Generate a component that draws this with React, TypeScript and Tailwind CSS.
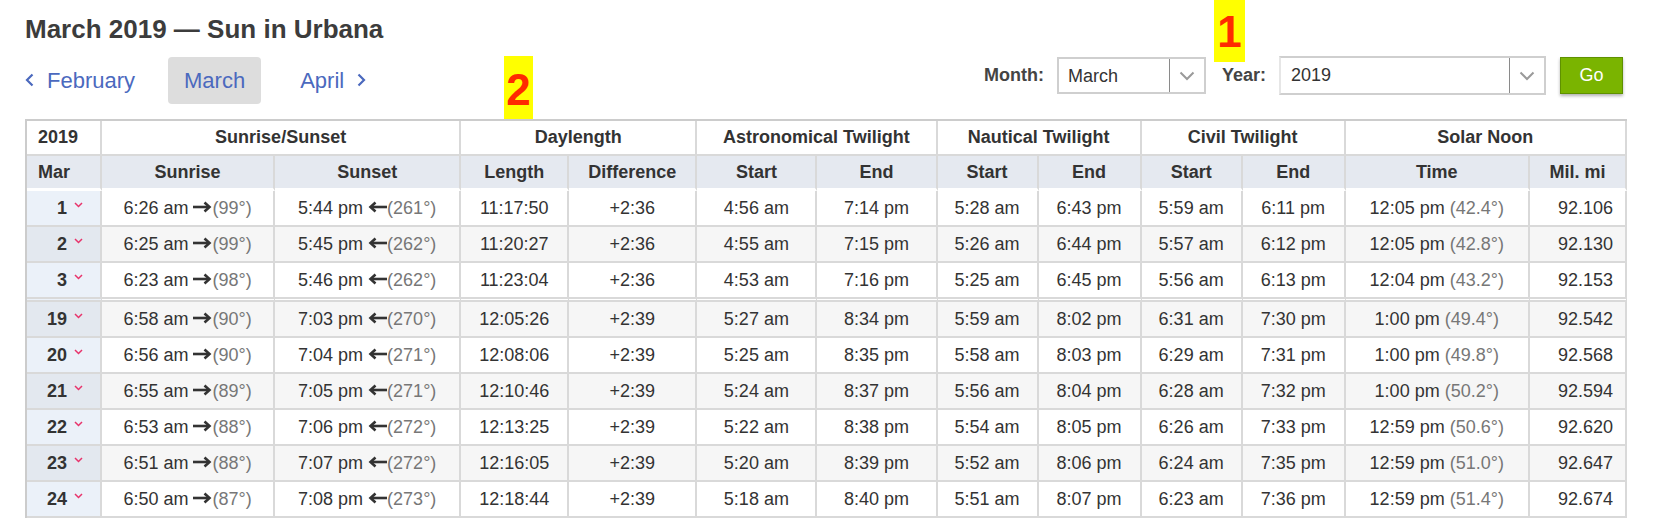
import React from 'react';

interface DayRow {
  day: number;
  rise: string;
  riseAz: string;
  set: string;
  setAz: string;
  length: string;
  diff: string;
  astStart: string;
  astEnd: string;
  nautStart: string;
  nautEnd: string;
  civStart: string;
  civEnd: string;
  noon: string;
  noonAlt: string;
  dist: string;
}

const rows: DayRow[] = [
  { day: 1, rise: '6:26 am', riseAz: '99°', set: '5:44 pm', setAz: '261°', length: '11:17:50', diff: '+2:36', astStart: '4:56 am', astEnd: '7:14 pm', nautStart: '5:28 am', nautEnd: '6:43 pm', civStart: '5:59 am', civEnd: '6:11 pm', noon: '12:05 pm', noonAlt: '42.4°', dist: '92.106' },
  { day: 2, rise: '6:25 am', riseAz: '99°', set: '5:45 pm', setAz: '262°', length: '11:20:27', diff: '+2:36', astStart: '4:55 am', astEnd: '7:15 pm', nautStart: '5:26 am', nautEnd: '6:44 pm', civStart: '5:57 am', civEnd: '6:12 pm', noon: '12:05 pm', noonAlt: '42.8°', dist: '92.130' },
  { day: 3, rise: '6:23 am', riseAz: '98°', set: '5:46 pm', setAz: '262°', length: '11:23:04', diff: '+2:36', astStart: '4:53 am', astEnd: '7:16 pm', nautStart: '5:25 am', nautEnd: '6:45 pm', civStart: '5:56 am', civEnd: '6:13 pm', noon: '12:04 pm', noonAlt: '43.2°', dist: '92.153' },
  { day: 19, rise: '6:58 am', riseAz: '90°', set: '7:03 pm', setAz: '270°', length: '12:05:26', diff: '+2:39', astStart: '5:27 am', astEnd: '8:34 pm', nautStart: '5:59 am', nautEnd: '8:02 pm', civStart: '6:31 am', civEnd: '7:30 pm', noon: '1:00 pm', noonAlt: '49.4°', dist: '92.542' },
  { day: 20, rise: '6:56 am', riseAz: '90°', set: '7:04 pm', setAz: '271°', length: '12:08:06', diff: '+2:39', astStart: '5:25 am', astEnd: '8:35 pm', nautStart: '5:58 am', nautEnd: '8:03 pm', civStart: '6:29 am', civEnd: '7:31 pm', noon: '1:00 pm', noonAlt: '49.8°', dist: '92.568' },
  { day: 21, rise: '6:55 am', riseAz: '89°', set: '7:05 pm', setAz: '271°', length: '12:10:46', diff: '+2:39', astStart: '5:24 am', astEnd: '8:37 pm', nautStart: '5:56 am', nautEnd: '8:04 pm', civStart: '6:28 am', civEnd: '7:32 pm', noon: '1:00 pm', noonAlt: '50.2°', dist: '92.594' },
  { day: 22, rise: '6:53 am', riseAz: '88°', set: '7:06 pm', setAz: '272°', length: '12:13:25', diff: '+2:39', astStart: '5:22 am', astEnd: '8:38 pm', nautStart: '5:54 am', nautEnd: '8:05 pm', civStart: '6:26 am', civEnd: '7:33 pm', noon: '12:59 pm', noonAlt: '50.6°', dist: '92.620' },
  { day: 23, rise: '6:51 am', riseAz: '88°', set: '7:07 pm', setAz: '272°', length: '12:16:05', diff: '+2:39', astStart: '5:20 am', astEnd: '8:39 pm', nautStart: '5:52 am', nautEnd: '8:06 pm', civStart: '6:24 am', civEnd: '7:35 pm', noon: '12:59 pm', noonAlt: '51.0°', dist: '92.647' },
  { day: 24, rise: '6:50 am', riseAz: '87°', set: '7:08 pm', setAz: '273°', length: '12:18:44', diff: '+2:39', astStart: '5:18 am', astEnd: '8:40 pm', nautStart: '5:51 am', nautEnd: '8:07 pm', civStart: '6:23 am', civEnd: '7:36 pm', noon: '12:59 pm', noonAlt: '51.4°', dist: '92.674' },
];

const colWidths = [77, 173, 186, 108, 128, 120, 120, 101, 103, 101, 103, 184, 97];

function ArrowRight() {
  return (
    <svg width="19" height="12" viewBox="0 0 19 12" className="inline-block align-middle -mt-[3px]">
      <line x1="0" y1="6" x2="16" y2="6" stroke="#333" strokeWidth="2.6" />
      <polyline points="11.5,1.5 16.5,6 11.5,10.5" fill="none" stroke="#333" strokeWidth="2.6" />
    </svg>
  );
}

function ArrowLeft() {
  return (
    <svg width="19" height="12" viewBox="0 0 19 12" className="inline-block align-middle -mt-[3px]">
      <line x1="3" y1="6" x2="19" y2="6" stroke="#333" strokeWidth="2.6" />
      <polyline points="7.5,1.5 2.5,6 7.5,10.5" fill="none" stroke="#333" strokeWidth="2.6" />
    </svg>
  );
}

function DayChevron() {
  return (
    <svg width="9" height="6" viewBox="0 0 9 6" className="inline-block ml-[7px] -mt-[8px] align-middle">
      <polyline points="1,1 4.5,4.5 8,1" fill="none" stroke="#e8336b" strokeWidth="1.5" />
    </svg>
  );
}

function SelectChevron() {
  return (
    <svg width="16" height="10" viewBox="0 0 16 10">
      <polyline points="1.5,1.5 8,8 14.5,1.5" fill="none" stroke="#9a9a9a" strokeWidth="2" />
    </svg>
  );
}

function NavChevron({ dir }: { dir: 'left' | 'right' }) {
  return (
    <svg width="9" height="14" viewBox="0 0 9 14">
      {dir === 'left' ? (
        <polyline points="7.5,1.5 2,7 7.5,12.5" fill="none" stroke="#4b69be" strokeWidth="2.2" />
      ) : (
        <polyline points="1.5,1.5 7,7 1.5,12.5" fill="none" stroke="#4b69be" strokeWidth="2.2" />
      )}
    </svg>
  );
}

export default function App() {
  const cell = 'border-r-2 border-b-2 border-[#d9d9d9] text-center whitespace-nowrap p-0';

  return (
    <div className="relative w-[1680px] h-[520px] overflow-hidden bg-white font-['Liberation_Sans',Arial,sans-serif] text-[#333]">
      <div className="pl-[25px] pt-[14px]">
        {/* Title */}
        <h1 className="text-[26px] leading-[30px] font-bold text-[#3c3c3c]">March 2019 — Sun in Urbana</h1>

        {/* Month nav + form */}
        <div className="mt-[12px] flex items-start w-[1602px]">
          <div className="flex items-center h-[48px] text-[22px] text-[#4b69be]">
            <a className="flex items-center gap-[13px] cursor-pointer">
              <NavChevron dir="left" />
              <span>February</span>
            </a>
            <span className="ml-[33px] h-[47px] px-4 flex items-center rounded bg-[#dddddd]">March</span>
            <a className="ml-[39px] flex items-center gap-[13px] cursor-pointer">
              <span>April</span>
              <NavChevron dir="right" />
            </a>
          </div>

          <div className="ml-auto mr-[4px] flex items-center h-[39px] text-[18px]">
            <span className="font-bold text-[#444]">Month:</span>
            <div className="ml-[13px] w-[149px] h-[37px] border-2 border-[#cfcfcf] flex items-stretch">
              <span className="flex-1 pl-[9px] pt-[2px] flex items-center">March</span>
              <span className="w-[35px] border-l border-[#8a8a8a] flex items-center justify-center">
                <SelectChevron />
              </span>
            </div>
            <span className="ml-[16px] font-bold text-[#444]">Year:</span>
            <div className="ml-[13px] w-[267px] h-[39px] border-2 border-[#cfcfcf] border-l-[#e6e6e6] flex items-stretch">
              <span className="flex-1 pl-[10px] flex items-center">2019</span>
              <span className="w-[35px] border-l border-[#8a8a8a] flex items-center justify-center">
                <SelectChevron />
              </span>
            </div>
            <button className="ml-[14px] w-[63px] h-[37px] bg-[#7ab400] border border-[#5f9100] text-white text-[18px] shadow-[0_2px_3px_rgba(0,0,0,0.3)]">
              Go
            </button>
          </div>
        </div>

        {/* Table */}
        <table className="mt-[15px] w-[1602px] table-fixed border-separate border-spacing-0 border-l-2 border-t-2 border-[#cccccc] text-[18px]">
          <colgroup>
            {colWidths.map((w, i) => (
              <col key={i} style={{ width: i === 0 ? w - 2 : w }} />
            ))}
          </colgroup>
          <thead>
            <tr className="font-bold">
              <th className={`${cell} h-[35px] text-left pl-[11px]`}>2019</th>
              <th colSpan={2} className={`${cell} h-[35px]`}>Sunrise/Sunset</th>
              <th colSpan={2} className={`${cell} h-[35px]`}>Daylength</th>
              <th colSpan={2} className={`${cell} h-[35px]`}>Astronomical Twilight</th>
              <th colSpan={2} className={`${cell} h-[35px]`}>Nautical Twilight</th>
              <th colSpan={2} className={`${cell} h-[35px]`}>Civil Twilight</th>
              <th colSpan={2} className={`${cell} h-[35px]`}>Solar Noon</th>
            </tr>
            <tr className="font-bold bg-[#e5e9f0]">
              {['Mar', 'Sunrise', 'Sunset', 'Length', 'Difference', 'Start', 'End', 'Start', 'End', 'Start', 'End', 'Time', 'Mil. mi'].map((h, i) => (
                <th
                  key={i}
                  className={`border-r-2 border-[#d9d9d9] border-b-[3px] border-b-white h-[35px] p-0 whitespace-nowrap ${i === 0 ? 'text-left pl-[11px]' : 'text-center'}`}
                >
                  {h}
                </th>
              ))}
            </tr>
          </thead>
          <tbody>
            {rows.map((r, idx) => {
              const odd = idx % 2 === 1;
              const sep = r.day === 3;
              const td = `${cell} ${sep ? 'border-b-[5px] border-double h-[39px]' : 'h-[36px]'}`;
              return (
                <tr key={r.day} className={odd ? 'bg-[#f6f6f6]' : 'bg-white'}>
                  <td className={`${td} text-right pr-[17px] font-bold ${odd ? 'bg-[#e3e8ef]' : 'bg-[#ebf1f9]'}`}>
                    {r.day}
                    <DayChevron />
                  </td>
                  <td className={td}>
                    {r.rise} <ArrowRight /><span className="text-[#777]">({r.riseAz})</span>
                  </td>
                  <td className={td}>
                    {r.set} <ArrowLeft /><span className="text-[#777]">({r.setAz})</span>
                  </td>
                  <td className={td}>{r.length}</td>
                  <td className={td}>{r.diff}</td>
                  <td className={td}>{r.astStart}</td>
                  <td className={td}>{r.astEnd}</td>
                  <td className={td}>{r.nautStart}</td>
                  <td className={td}>{r.nautEnd}</td>
                  <td className={td}>{r.civStart}</td>
                  <td className={td}>{r.civEnd}</td>
                  <td className={td}>
                    {r.noon} <span className="text-[#777]">({r.noonAlt})</span>
                  </td>
                  <td className={`${td} !text-right pr-[12px]`}>{r.dist}</td>
                </tr>
              );
            })}
          </tbody>
        </table>
      </div>

      {/* Annotation markers */}
      <div className="absolute left-[1214px] top-0 w-[31px] h-[62px] bg-[#ffff00] flex items-center justify-center pt-[2px] text-[44px] leading-none font-bold text-[#ff2a00]">
        1
      </div>
      <div className="absolute left-[504px] top-[56px] w-[29px] h-[63px] bg-[#ffff00] flex items-center justify-center pt-[4px] text-[44px] leading-none font-bold text-[#ff2a00]">
        2
      </div>
    </div>
  );
}
